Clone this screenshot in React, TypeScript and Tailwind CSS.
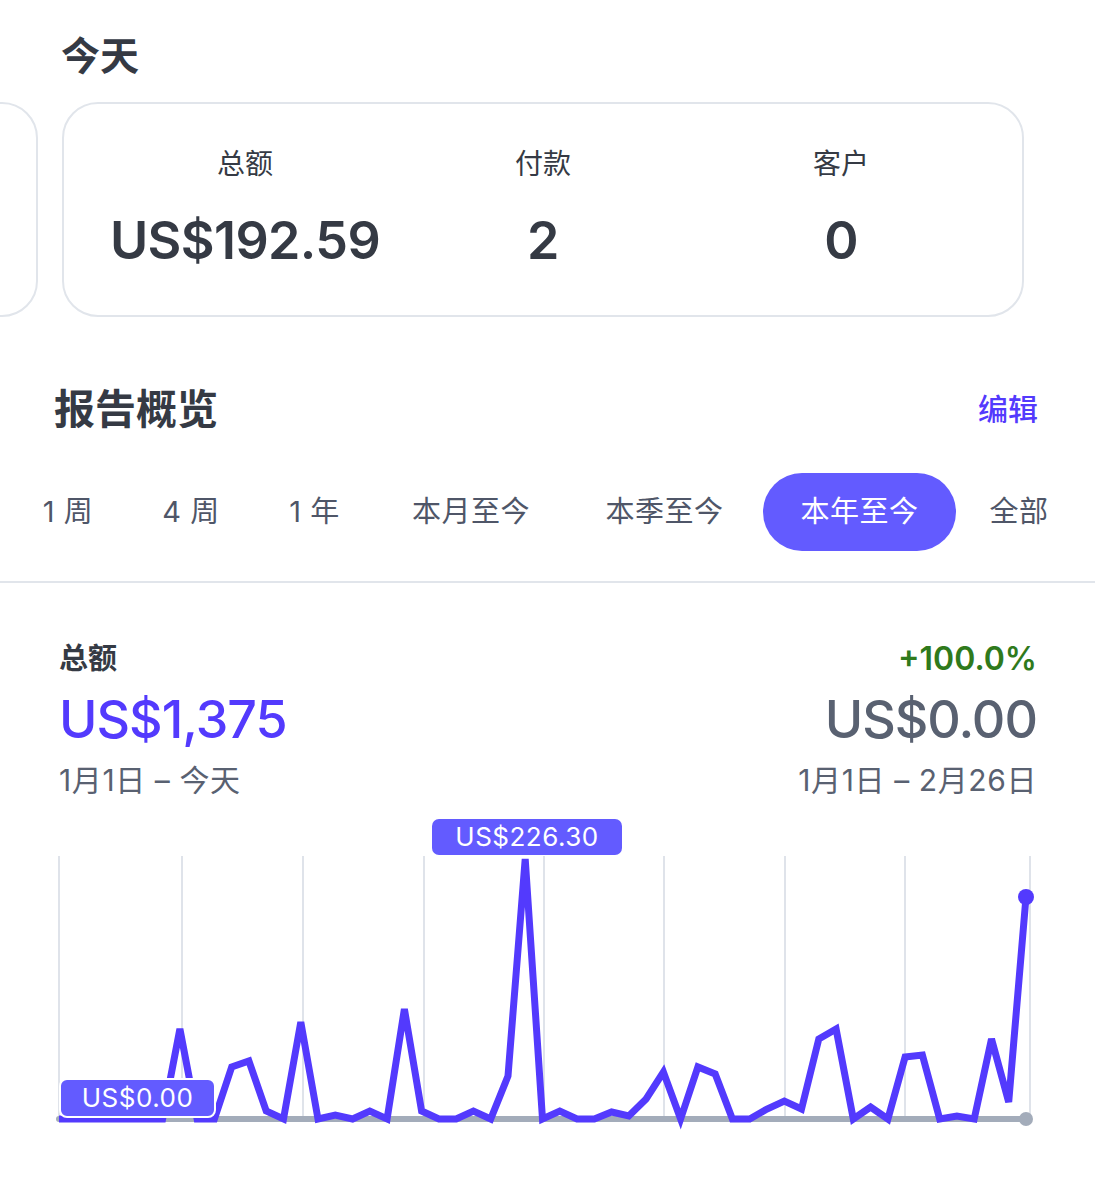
import React from "react";

const heights = [
  0, 0, 0, 0, 0, 0, 0, 90, 0, 0, 52, 58, 8, 0, 97, 0, 4, 0, 8, 0, 110, 8, 0, 0, 8, 0, 43, 260, 0, 8, 0, 0, 7, 3, 20,
  47, 0, 52, 45, 0, 0, 10, 18, 10, 80, 90, 0, 12, 0, 62, 64, 0, 3, 0, 80, 17, 222,
];

const gridX = [59, 182, 303, 424, 544, 664, 785, 905, 1030];
const BASE = 310;

const tabs = [
  { label: "1 周", w: "w-[122px]" },
  { label: "4 周", w: "w-[124px]" },
  { label: "1 年", w: "w-[123px]" },
  { label: "本月至今", w: "w-[190px]" },
  { label: "本季至今", w: "w-[197px]" },
  { label: "本年至今", w: "w-[193px]", active: true },
  { label: "全部", w: "w-[126px]" },
];

function Chart() {
  const step = 967 / (heights.length - 1);
  const pts = heights.map((h, i) => `${(59 + i * step).toFixed(1)},${BASE - h}`).join(" ");
  const lastX = 59 + (heights.length - 1) * step;
  const lastY = BASE - heights[heights.length - 1];

  return (
    <div className="relative mt-[11px] h-[340px] w-[1095px]">
      <svg width="1095" height="340" viewBox="0 0 1095 340" className="absolute left-0 top-0">
        {gridX.map((x) => (
          <line key={x} x1={x} y1={47} x2={x} y2={BASE} stroke="#dfe3ea" strokeWidth="2" />
        ))}
        <line x1={59} y1={BASE} x2={lastX} y2={BASE} stroke="#a3acba" strokeWidth="6" strokeLinecap="round" />
        <circle cx={lastX} cy={BASE} r="7" fill="#a3acba" />
        <polyline points={pts} fill="none" stroke="#533afd" strokeWidth="7" strokeLinejoin="miter" />
        <circle cx={lastX} cy={lastY} r="8" fill="#533afd" />
      </svg>
      <div className="absolute left-[432px] top-[10px] flex h-[36px] w-[190px] items-center justify-center rounded-[7px] bg-[#635bff] text-[26px] leading-none tracking-[0.5px] text-white">
        US$226.30
      </div>
      <div className="absolute left-[59px] top-[269px] flex h-[40px] w-[157px] items-center justify-center rounded-[8px] border-2 border-white bg-[#635bff] text-[26px] leading-none tracking-[0.5px] text-white">
        US$0.00
      </div>
    </div>
  );
}

export default function App() {
  return (
    <div
      className="w-[1095px] h-[1200px] overflow-hidden bg-white text-[#353a44]"
      style={{ fontFamily: 'Inter, "Noto Sans CJK SC", sans-serif' }}
    >
      {/* Today */}
      <h2 className="pl-[61px] pt-[34px] text-[39px] font-semibold leading-[44px]">今天</h2>
      <div className="mt-[24px] flex gap-[24px]">
        <div className="-ml-[262px] h-[215px] w-[300px] shrink-0 rounded-[36px] border-2 border-[#e1e5eb]" />
        <div className="grid h-[215px] w-[962px] shrink-0 grid-cols-3 rounded-[36px] border-2 border-[#e1e5eb] px-[32px] pt-[43px]">
          {[
            ["总额", "US$192.59"],
            ["付款", "2"],
            ["客户", "0"],
          ].map(([label, value]) => (
            <div key={label} className="flex flex-col items-center">
              <div className="text-[28px] leading-[34px]">{label}</div>
              <div className="mt-[30px] text-[52px] font-semibold leading-[60px] tracking-[-0.6px]">{value}</div>
            </div>
          ))}
        </div>
      </div>

      {/* Report overview */}
      <div className="mt-[68px] flex items-center justify-between pl-[54px] pr-[57px]">
        <h2 className="text-[41px] font-bold leading-[48px]">报告概览</h2>
        <button className="text-[30px] font-medium leading-[48px] text-[#533afd]">编辑</button>
      </div>
      <div className="mt-[40px] border-b-2 border-[#e1e5eb] pb-[30px]">
        <div className="flex items-center pl-[7px]">
          {tabs.map((t) => (
            <div
              key={t.label}
              className={
                t.active
                  ? `${t.w} flex h-[78px] shrink-0 items-center justify-center rounded-full bg-[#635bff] text-[29px] tracking-[0.5px] text-white`
                  : `${t.w} flex h-[78px] shrink-0 items-center justify-center whitespace-pre text-[29px] tracking-[0.5px] text-[#4f5668]`
              }
            >
              {t.label}
            </div>
          ))}
        </div>
      </div>

      {/* Gross volume */}
      <div className="flex justify-between pl-[59px] pr-[58px] pt-[58px]">
        <div className="flex flex-col">
          <div className="text-[29px] font-bold leading-[36px]">总额</div>
          <div className="mt-[13px] text-[52px] font-medium leading-[60px] tracking-[-1px] text-[#533afd]">US$1,375</div>
          <div className="mt-[12px] text-[30px] leading-[36px] tracking-[0.6px] text-[#596171]">1月1日 – 今天</div>
        </div>
        <div className="flex flex-col items-end">
          <div className="text-[32px] font-semibold leading-[36px] text-[#2f7a1c]">+100.0%</div>
          <div className="mt-[13px] text-[52px] font-medium leading-[60px] tracking-[-1px] text-[#596171]">US$0.00</div>
          <div className="mt-[12px] text-[30px] leading-[36px] tracking-[0.6px] text-[#596171]">1月1日 – 2月26日</div>
        </div>
      </div>

      <Chart />
    </div>
  );
}
